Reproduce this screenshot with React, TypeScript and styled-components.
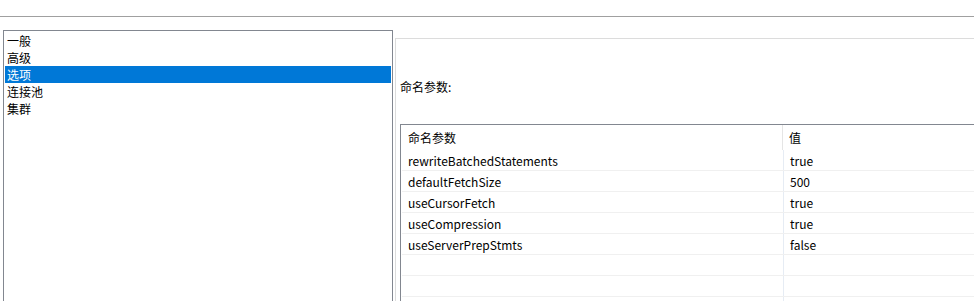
import React from "react";
import styled, { createGlobalStyle } from "styled-components";

const Global = createGlobalStyle`
  html, body { margin: 0; padding: 0; background: #ffffff; }
  body {
    font-family: "Microsoft YaHei", "Noto Sans CJK SC", sans-serif;
    font-size: 12px;
    color: #000000;
  }
`;

const Page = styled.div`
  width: 974px;
  height: 301px;
  overflow: hidden;
  background: #ffffff;
`;

const TopBar = styled.div`
  height: 16px;
  border-bottom: 1px solid #a0a0a0;
`;

const Body = styled.div`
  display: flex;
  align-items: flex-start;
  padding: 13px 0 0 3px;
`;

const ListBox = styled.div`
  box-sizing: border-box;
  flex: 0 0 390px;
  width: 390px;
  height: 320px;
  border: 1px solid #828790;
  padding: 1px;
`;

const ListItem = styled.div<{ $selected?: boolean }>`
  height: 17px;
  line-height: 17px;
  padding-left: 2px;
  white-space: nowrap;
  background: ${(p) => (p.$selected ? "#0078d7" : "transparent")};
  color: ${(p) => (p.$selected ? "#ffffff" : "#000000")};
`;

const Panel = styled.div`
  box-sizing: border-box;
  flex: 0 0 640px;
  margin: 8px 0 0 2px;
  height: 320px;
  border: 1px solid #dcdcdc;
  padding: 39px 0 0 4px;
`;

const Label = styled.div`
  height: 17px;
  line-height: 17px;
  margin-bottom: 29px;
`;

const Table = styled.div`
  box-sizing: border-box;
  width: 620px;
  border: 1px solid #828790;
  border-right: none;
`;

const Row = styled.div<{ $header?: boolean }>`
  display: grid;
  grid-template-columns: 381px 1fr;
  height: ${(p) => (p.$header ? "25px" : "20px")};
  margin-left: ${(p) => (p.$header ? "0" : "1px")};
  border-bottom: ${(p) => (p.$header ? "none" : "1px solid #f0f0f0")};
`;

const Cell = styled.div<{ $header?: boolean; $first?: boolean }>`
  display: flex;
  align-items: center;
  padding-left: ${(p) => (p.$first ? (p.$header ? "7px" : "6px") : "6px")};
  border-left: ${(p) =>
    p.$first ? "none" : p.$header ? "1px solid #e5e5e5" : "1px solid #e6ecf4"};
  white-space: nowrap;
  overflow: hidden;
`;

const items = ["一般", "高级", "选项", "连接池", "集群"];

const params: [string, string][] = [
  ["rewriteBatchedStatements", "true"],
  ["defaultFetchSize", "500"],
  ["useCursorFetch", "true"],
  ["useCompression", "true"],
  ["useServerPrepStmts", "false"],
  ["", ""],
  ["", ""],
  ["", ""],
];

export default function App() {
  return (
    <Page>
      <Global />
      <TopBar />
      <Body>
        <ListBox>
          {items.map((it) => (
            <ListItem key={it} $selected={it === "选项"}>
              {it}
            </ListItem>
          ))}
        </ListBox>
        <Panel>
          <Label>命名参数:</Label>
          <Table>
            <Row $header>
              <Cell $header $first>命名参数</Cell>
              <Cell $header>值</Cell>
            </Row>
            {params.map(([k, v], i) => (
              <Row key={i}>
                <Cell $first>{k}</Cell>
                <Cell>{v}</Cell>
              </Row>
            ))}
          </Table>
        </Panel>
      </Body>
    </Page>
  );
}
